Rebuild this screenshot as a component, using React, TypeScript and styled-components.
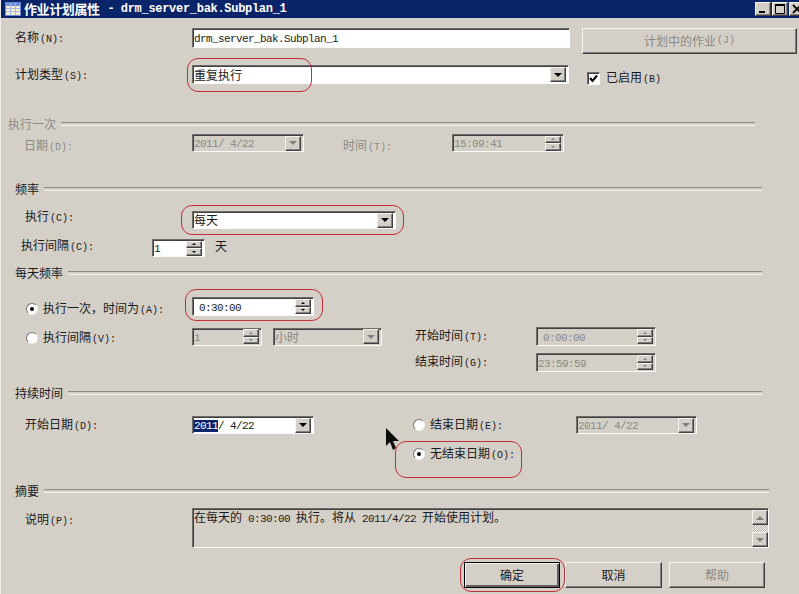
import React, { FC, ReactNode } from 'react';
import styled, { createGlobalStyle } from 'styled-components';

const FACE = '#d4d0c8';
const CJK = '"Noto Sans CJK SC", sans-serif';
const MONO = '"Liberation Mono", "Noto Sans CJK SC", monospace';
const GRAY = '#8a8a86';
const RING = '#c4303a';

const GlobalStyle = createGlobalStyle`
	html, body {
		margin: 0;
		padding: 0;
		background: ${FACE};
	}
	* {
		box-sizing: border-box;
	}
`;

const Dialog = styled.div`
	width: 799px;
	height: 594px;
	position: relative;
	overflow: hidden;
	background: ${FACE};
	border-left: 1px solid #efeee9;
	font-family: ${CJK};
	font-size: 12px;
	line-height: 14px;
	color: #1a1a1a;
`;

const TitleBar = styled.div`
	height: 18px;
	margin-left: -1px;
	background: #0a246a;
	display: flex;
	align-items: center;
	padding-left: 5px;
	color: #fff;
	font-weight: 700;
	font-size: 13px;
`;

const TitleName = styled.span`
	margin-left: 3px;
	letter-spacing: -0.4px;
`;

const TitleDash = styled.span`
	font-family: ${MONO};
	font-size: 12px;
	margin-left: 8px;
`;

const TitleFile = styled.span`
	font-family: ${MONO};
	font-size: 12px;
	letter-spacing: -0.3px;
	margin-left: 6px;
`;

const WindowButtons = styled.div`
	margin-left: auto;
	display: flex;
	gap: 1px;
	margin-right: -6px;
`;

const raised = `
	background: ${FACE};
	border: 1px solid;
	border-color: #f4f3ef #404040 #404040 #f4f3ef;
	box-shadow: inset -1px -1px 0 #808080;
`;

const WindowButton = styled.div`
	${raised}
	width: 16px;
	height: 14px;
	display: flex;
	align-items: center;
	justify-content: center;
`;

type RowProps = { $gap: number; $h: number; $left: number; $start?: boolean };

const Row = styled.div<RowProps>`
	display: flex;
	align-items: ${({ $start }): string => ($start ? 'flex-start' : 'center')};
	margin-top: ${({ $gap }): number => $gap}px;
	height: ${({ $h }): number => $h}px;
	padding-left: ${({ $left }): number => $left}px;
`;

const Heading = styled.div<{ $gap: number; $left: number; $right: number; $off?: boolean }>`
	display: flex;
	align-items: center;
	height: 14px;
	margin-top: ${({ $gap }): number => $gap}px;
	padding-left: ${({ $left }): number => $left}px;
	padding-right: ${({ $right }): number => $right}px;
	color: ${({ $off }): string => ($off ? GRAY : 'inherit')};
	&::after {
		content: '';
		flex: 1;
		height: 2px;
		margin-left: 5px;
		border-top: 1px solid #8c8a84;
		border-bottom: 1px solid #f4f3ef;
	}
`;

type LabelProps = { $w: number; $lift?: number; $drop?: number; $ml?: number; $off?: boolean };

const Label = styled.div<LabelProps>`
	width: ${({ $w }): number => $w}px;
	flex: none;
	white-space: nowrap;
	padding-bottom: ${({ $lift }): number => $lift ?? 0}px;
	padding-top: ${({ $drop }): number => $drop ?? 0}px;
	margin-left: ${({ $ml }): number => $ml ?? 0}px;
	color: ${({ $off }): string => ($off ? GRAY : 'inherit')};
`;

const Key = styled.span`
	font-family: ${MONO};
	font-size: 10px;
	margin-left: 1px;
`;

const Latin = styled.span`
	font-family: ${MONO};
	font-size: 11px;
	letter-spacing: -0.6px;
	white-space: pre;
`;

const sunken = `
	border: 1px solid;
	border-color: #6e6c68 #fbfbf9 #fbfbf9 #6e6c68;
	box-shadow: inset 1px 1px 0 #404040;
`;

const Field = styled.div<{ $w: number; $h?: number; $off?: boolean; $ml?: number; $dark?: boolean }>`
	${sunken}
	flex: none;
	position: relative;
	display: flex;
	align-items: center;
	width: ${({ $w }): number => $w}px;
	height: ${({ $h }): number => $h ?? 18}px;
	margin-left: ${({ $ml }): number => $ml ?? 0}px;
	background: ${({ $off }): string => ($off ? FACE : '#fff')};
	color: ${({ $off, $dark }): string => ($off && !$dark ? GRAY : '#1a1a1a')};
	padding-left: 1px;
	padding-right: 2px;
`;

const Value = styled.div<{ $pad?: number }>`
	flex: 1;
	min-width: 0;
	white-space: nowrap;
	padding-left: ${({ $pad }): number => $pad ?? 0}px;
`;

const Selected = styled.span`
	background: #0a246a;
	color: #fff;
`;

const ArrowButton = styled.div`
	${raised}
	width: 16px;
	height: 15px;
	flex: none;
	display: flex;
	align-items: center;
	justify-content: center;
`;

const Triangle = styled.i<{ $off?: boolean; $up?: boolean; $size?: number }>`
	display: block;
	width: 0;
	height: 0;
	border-left: ${({ $size }): number => $size ?? 4}px solid transparent;
	border-right: ${({ $size }): number => $size ?? 4}px solid transparent;
	${({ $up, $off, $size }): string =>
		`${$up ? 'border-bottom' : 'border-top'}: ${$size ?? 4}px solid ${$off ? '#808080' : '#000'};`}
`;

const SpinColumn = styled.div`
	display: flex;
	flex-direction: column;
	flex: none;
	width: 16px;
	height: 15px;
`;

const SpinPart = styled.div`
	${raised}
	flex: 1;
	display: flex;
	align-items: center;
	justify-content: center;
`;

const Marked = styled.div`
	position: relative;
	display: flex;
	align-items: center;
	flex: none;
`;

const Ring = styled.div<{ $x: number; $y: number; $w: number; $h: number }>`
	position: absolute;
	left: ${({ $x }): number => $x}px;
	top: ${({ $y }): number => $y}px;
	width: ${({ $w }): number => $w}px;
	height: ${({ $h }): number => $h}px;
	border: 1px solid ${RING};
	border-radius: 11px;
	pointer-events: none;
`;

const PushButton = styled.div<{ $w: number; $h: number; $off?: boolean; $ml?: number; $mt?: number }>`
	${raised}
	flex: none;
	display: flex;
	align-items: center;
	justify-content: center;
	width: ${({ $w }): number => $w}px;
	height: ${({ $h }): number => $h}px;
	margin-left: ${({ $ml }): number => $ml ?? 0}px;
	margin-top: ${({ $mt }): number => $mt ?? 0}px;
	color: ${({ $off }): string => ($off ? GRAY : 'inherit')};
`;

const DefaultButton = styled(PushButton)`
	border: 1px solid #000;
	box-shadow: inset 1px 1px 0 #f4f3ef, inset -2px -2px 0 #606060;
`;

const CheckBox = styled.div`
	${sunken}
	width: 13px;
	height: 13px;
	background: #fff;
	display: flex;
	align-items: center;
	justify-content: center;
	flex: none;
`;

const CheckField = styled.div`
	display: flex;
	align-items: center;
	gap: 6px;
	margin-left: 18px;
	margin-top: 8px;
`;

const RadioMark = styled.div<{ $on?: boolean; $ml?: number }>`
	width: 12px;
	height: 12px;
	flex: none;
	border-radius: 50%;
	background: #fff;
	border: 1px solid;
	border-color: #77756f #f4f3ef #f4f3ef #77756f;
	display: flex;
	align-items: center;
	justify-content: center;
	margin-left: ${({ $ml }): number => $ml ?? 0}px;
	&::after {
		content: '';
		display: ${({ $on }): string => ($on ? 'block' : 'none')};
		width: 4px;
		height: 4px;
		border-radius: 50%;
		background: #000;
	}
`;

const RadioField = styled.div<{ $w: number; $drop?: number }>`
	display: flex;
	align-items: center;
	gap: 5px;
	flex: none;
	width: ${({ $w }): number => $w}px;
	margin-top: ${({ $drop }): number => $drop ?? 0}px;
`;

const SideLabel = styled.div<{ $ml: number }>`
	margin-left: ${({ $ml }): number => $ml}px;
	white-space: nowrap;
	font-size: 12px;
	margin-bottom: 4px;
`;

const ScrollBar = styled.div`
	position: absolute;
	right: 0;
	top: 1px;
	bottom: 0;
	width: 16px;
	display: flex;
	flex-direction: column;
`;

const ScrollButton = styled.div`
	${raised}
	height: 15px;
	flex: none;
	display: flex;
	align-items: center;
	justify-content: center;
`;

const ScrollTrack = styled.div`
	flex: 1;
	background: repeating-conic-gradient(#efeee9 0 25%, #b9b7b0 0 50%) 0 0 / 2px 2px;
`;

const SummaryText = styled.div`
	align-self: flex-start;
	padding-top: 1px;
	white-space: nowrap;
`;

const Cursor = styled.svg`
	position: absolute;
	left: 383px;
	top: 427px;
`;

const Combo: FC<{ w: number; off?: boolean; ml?: number; h?: number; children: ReactNode }> = ({
	w,
	off,
	ml,
	h,
	children
}) => (
	<Field $w={w} $off={off} $ml={ml} $h={h}>
		<Value>{children}</Value>
		<ArrowButton>
			<Triangle $off={off} />
		</ArrowButton>
	</Field>
);

const Spin: FC<{ w: number; off?: boolean; ml?: number; h?: number; pad?: number; children: ReactNode }> = ({
	w,
	off,
	ml,
	h,
	pad,
	children
}) => (
	<Field $w={w} $off={off} $ml={ml} $h={h}>
		<Value $pad={pad}>{children}</Value>
		<SpinColumn>
			<SpinPart>
				<Triangle $up $size={2} $off={off} />
			</SpinPart>
			<SpinPart>
				<Triangle $size={2} $off={off} />
			</SpinPart>
		</SpinColumn>
	</Field>
);

const Text: FC<{ name: string; hot: string }> = ({ name, hot }) => (
	<>
		{name}
		<Key>({hot}):</Key>
	</>
);

const App: FC = () => (
	<Dialog>
		<GlobalStyle />
		<TitleBar>
			<svg width="16" height="14" viewBox="0 0 16 14">
				<rect x="0.5" y="0.5" width="15" height="13" fill="#f6eccf" stroke="#6c8ad6" />
				<rect x="1" y="1" width="14" height="3" fill="#6f8fe0" />
				<path d="M1 6.5H15M1 9.5H15M5.5 1V13M10.5 1V13" stroke="#a9b8e2" />
			</svg>
			<TitleName>作业计划属性</TitleName>
			<TitleDash>-</TitleDash>
			<TitleFile>drm_server_bak.Subplan_1</TitleFile>
			<WindowButtons>
				<WindowButton>
					<svg width="10" height="10" viewBox="0 0 10 10">
						<rect x="1" y="7" width="6" height="2" fill="#000" />
					</svg>
				</WindowButton>
				<WindowButton>
					<svg width="10" height="10" viewBox="0 0 10 10">
						<path d="M0.5 1.5H9.5V9.5H0.5Z" fill="none" stroke="#000" />
						<rect x="0" y="0" width="10" height="2" fill="#000" />
					</svg>
				</WindowButton>
				<WindowButton>
					<svg width="10" height="10" viewBox="0 0 10 10">
						<path d="M1 1L9 9M9 1L1 9" stroke="#000" strokeWidth="1.8" />
					</svg>
				</WindowButton>
			</WindowButtons>
		</TitleBar>

		<Row $gap={10} $h={20} $left={14}>
			<Label $w={177}>
				<Text name="名称" hot="N" />
			</Label>
			<Field $w={378} $h={20}>
				<Value>
					<Latin>drm_server_bak.Subplan_1</Latin>
				</Value>
			</Field>
			<PushButton $w={215} $h={26} $ml={12} $mt={5} $off>
				计划中的作业
				<Key>(J)</Key>
			</PushButton>
		</Row>

		<Row $gap={17} $h={19} $left={14}>
			<Label $w={177} $drop={1}>
				<Text name="计划类型" hot="S" />
			</Label>
			<Marked>
				<Combo w={377} h={19}>
					重复执行
				</Combo>
				<Ring $x={-5} $y={-7} $w={125} $h={34} />
			</Marked>
			<CheckField>
				<CheckBox>
					<svg width="9" height="9" viewBox="0 0 9 9">
						<path d="M1 4L3.5 7L8 1.5" fill="none" stroke="#000" strokeWidth="2" />
					</svg>
				</CheckBox>
				<div>
					已启用
					<Key>(B)</Key>
				</div>
			</CheckField>
		</Row>

		<Heading $gap={33} $left={7} $right={44} $off>
			执行一次
		</Heading>
		<Row $gap={3} $h={18} $left={23}>
			<Label $w={168} $drop={6} $off>
				<Text name="日期" hot="D" />
			</Label>
			<Combo w={112} off>
				<Latin>2011/ 4/22</Latin>
			</Combo>
			<Label $w={109} $ml={39} $drop={6} $off>
				<Text name="时间" hot="T" />
			</Label>
			<Spin w={112} off>
				<Latin>15:09:41</Latin>
			</Spin>
		</Row>

		<Heading $gap={30} $left={14} $right={37}>
			频率
		</Heading>
		<Row $gap={15} $h={18} $left={24}>
			<Label $w={167} $lift={6}>
				<Text name="执行" hot="C" />
			</Label>
			<Marked>
				<Combo w={204}>每天</Combo>
				<Ring $x={-11} $y={-6} $w={223} $h={30} />
			</Marked>
		</Row>
		<Row $gap={10} $h={18} $left={20}>
			<Label $w={131} $lift={3}>
				<Text name="执行间隔" hot="C" />
			</Label>
			<Spin w={53}>
				<Latin>1</Latin>
			</Spin>
			<SideLabel $ml={10}>天</SideLabel>
		</Row>

		<Heading $gap={9} $left={14} $right={37}>
			每天频率
		</Heading>
		<Row $gap={17} $h={19} $left={25}>
			<RadioField $w={166} $drop={5}>
				<RadioMark $on />
				<div>
					执行一次，时间为
					<Key>(A):</Key>
				</div>
			</RadioField>
			<Marked>
				<Spin w={122} h={19} pad={5}>
					<Latin>0:30:00</Latin>
				</Spin>
				<Ring $x={-7} $y={-8} $w={138} $h={32} />
			</Marked>
		</Row>
		<Row $gap={11} $h={19} $left={25}>
			<RadioField $w={166} $drop={3}>
				<RadioMark />
				<div>
					执行间隔
					<Key>(V):</Key>
				</div>
			</RadioField>
			<Spin w={70} off>
				<Latin>1</Latin>
			</Spin>
			<Combo w={109} off ml={11}>
				小时
			</Combo>
			<Label $w={121} $ml={33}>
				<Text name="开始时间" hot="T" />
			</Label>
			<Spin w={120} h={19} off pad={5}>
				<Latin>0:00:00</Latin>
			</Spin>
		</Row>
		<Row $gap={7} $h={19} $left={414}>
			<Label $w={121}>
				<Text name="结束时间" hot="G" />
			</Label>
			<Spin w={120} h={19} off>
				<Latin>23:59:59</Latin>
			</Spin>
		</Row>

		<Heading $gap={14} $left={14} $right={37}>
			持续时间
		</Heading>
		<Row $gap={16} $h={18} $left={24}>
			<Label $w={167} $drop={1}>
				<Text name="开始日期" hot="D" />
			</Label>
			<Combo w={122}>
				<Latin>
					<Selected>2011</Selected>/ 4/22
				</Latin>
			</Combo>
			<RadioMark $ml={99} />
			<Label $w={146} $ml={5} $drop={1}>
				<Text name="结束日期" hot="E" />
			</Label>
			<Combo w={121} off>
				<Latin>2011/ 4/22</Latin>
			</Combo>
		</Row>
		<Row $gap={11} $h={18} $left={412}>
			<Marked>
				<RadioField $w={104}>
					<RadioMark $on />
					<div>
						无结束日期
						<Key>(O):</Key>
					</div>
				</RadioField>
				<Ring $x={-18} $y={-5} $w={127} $h={37} />
			</Marked>
		</Row>

		<Heading $gap={21} $left={14} $right={30}>
			摘要
		</Heading>
		<Row $gap={10} $h={40} $left={24} $start>
			<Label $w={167} $drop={4}>
				<Text name="说明" hot="P" />
			</Label>
			<Field $w={577} $h={40} $off $dark>
				<SummaryText>
					在每天的<Latin> 0:30:00 </Latin>执行。将从<Latin> 2011/4/22 </Latin>开始使用计划。
				</SummaryText>
				<ScrollBar>
					<ScrollButton>
						<Triangle $up $off />
					</ScrollButton>
					<ScrollTrack />
					<ScrollButton>
						<Triangle $off />
					</ScrollButton>
				</ScrollBar>
			</Field>
		</Row>

		<Row $gap={14} $h={26} $left={463}>
			<Marked>
				<DefaultButton $w={96} $h={26}>
					确定
				</DefaultButton>
				<Ring $x={-4} $y={-4} $w={105} $h={34} />
			</Marked>
			<PushButton $w={97} $h={26} $ml={5}>
				取消
			</PushButton>
			<PushButton $w={96} $h={26} $ml={7} $off>
				帮助
			</PushButton>
		</Row>

		<Cursor width="18" height="26" viewBox="0 0 18 26">
			<path d="M2 1L2 19L6 15L9 23L12 21L9 14L15 14Z" fill="#0c0c0c" />
		</Cursor>
	</Dialog>
);

export default App;
